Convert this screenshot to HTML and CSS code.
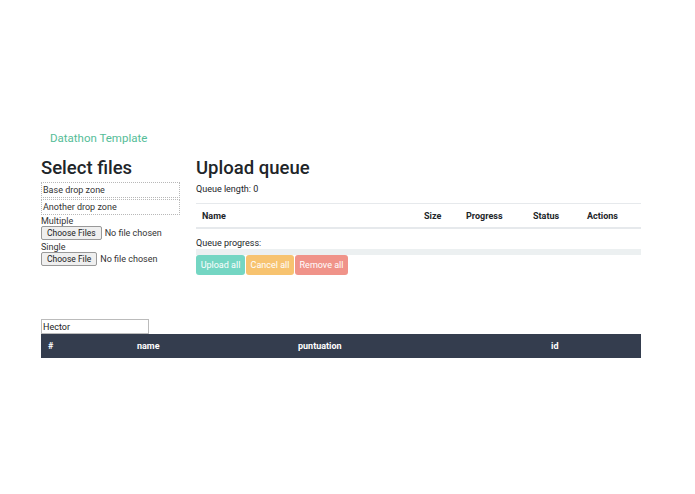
FILE: index.html
```html
<!DOCTYPE html>
<html lang="en">
<head>
  <meta charset="UTF-8">
  <title>Datathon Template</title>
  <link rel="stylesheet" href="styles.css">
</head>
<body>
  <div class="navbar"><span class="brand">Datathon Template</span></div>

  <div class="container">
    <div class="row">
      <div class="col-left">
        <h3>Select files</h3>
        <div class="drop-zone">Base drop zone</div>
        <div class="drop-zone">Another drop zone</div>
        <div class="label">Multiple</div>
        <div class="file-line"><button class="file-btn">Choose Files</button><span>No file chosen</span></div>
        <div class="label">Single</div>
        <div class="file-line"><button class="file-btn">Choose File</button><span>No file chosen</span></div>
      </div>

      <div class="col-right">
        <h3>Upload queue</h3>
        <p class="qlen">Queue length: 0</p>
        <table class="queue">
          <thead>
            <tr>
              <th class="c-name">Name</th>
              <th class="c-size">Size</th>
              <th class="c-prog">Progress</th>
              <th class="c-status">Status</th>
              <th class="c-act">Actions</th>
            </tr>
          </thead>
        </table>
        <div class="qprog">Queue progress:</div>
        <div class="progress"></div>
        <div class="btns">
          <button class="btn btn-success">Upload all</button>
          <button class="btn btn-warning">Cancel all</button>
          <button class="btn btn-danger">Remove all</button>
        </div>
      </div>
    </div>

    <input class="search" type="text" value="Hector">
    <table class="scores">
      <thead>
        <tr>
          <th class="s-num">#</th>
          <th class="s-name">name</th>
          <th class="s-punt">puntuation</th>
          <th class="s-id">id</th>
        </tr>
      </thead>
    </table>
  </div>
</body>
</html>
```

FILE: styles.css
```css
body {
  margin: 0;
  font-family: Roboto, "Liberation Sans", sans-serif;
  font-size: 9px;
  color: #212529;
  background: #fff;
}

.navbar {
  padding: 131px 0 0 50px;
  height: 18px;
}
.brand {
  color: #55bd98;
  font-size: 11.5px;
}

.container {
  width: 600px;
  margin-left: 41px;
  padding-top: 8px;
}

.row {
  display: flex;
  gap: 16px;
}
.col-left {
  width: 139px;
}
.col-right {
  flex: 1;
}

h3 {
  margin: 0 0 2px;
  font-size: 18.5px;
  font-weight: 500;
  line-height: 22px;
}

.col-left h3 {
  margin-bottom: 3px;
}

.drop-zone {
  border: 1px dotted #b8b8b8;
  padding: 0 1px;
  height: 14px;
  line-height: 14px;
  margin-bottom: 1px;
  color: #333;
}

.label {
  line-height: 10px;
  color: #333;
}
.file-line {
  display: flex;
  align-items: center;
  gap: 3px;
  margin: 0 0 2px;
  color: #333;
}
.file-btn {
  font-family: inherit;
  font-size: 8.5px;
  color: #222;
  background: #efefef;
  border: 1px solid #999;
  border-radius: 2px;
  height: 14px;
  padding: 0 5px;
}

.qlen {
  margin: 5px 0 8px;
  line-height: 11px;
}

.queue {
  width: 100%;
  border-collapse: collapse;
  border-top: 1px solid #e6e9ec;
  border-bottom: 2px solid #e6e9ec;
}
.queue th {
  text-align: left;
  font-weight: 700;
  height: 23px;
  padding: 0;
}
.c-name { padding-left: 6px !important; }
.c-size { width: 42px; }
.c-prog { width: 67px; }
.c-status { width: 54px; }
.c-act { width: 54px; }

.qprog {
  margin-top: 8px;
  line-height: 12px;
}
.progress {
  height: 6px;
  background: #ecf0f1;
}
.btns {
  display: flex;
}
.btn {
  font-family: inherit;
  font-size: 9px;
  color: #fff;
  border: none;
  border-radius: 3px;
  height: 20px;
  padding: 0;
  white-space: nowrap;
  opacity: 0.6;
  margin-right: 1px;
}
.btn-success { background: #18bc9c; width: 49px; }
.btn-warning { background: #f39c12; width: 48px; }
.btn-danger { background: #e74c3c; width: 53px; }

.search {
  display: block;
  margin-top: 44px;
  width: 108px;
  height: 15px;
  box-sizing: border-box;
  border: 1px solid #bbb;
  font-family: inherit;
  font-size: 9px;
  padding: 0 1px;
  color: #222;
}

.scores {
  width: 100%;
  border-collapse: collapse;
  background: #343d4e;
  color: #fff;
}
.scores th {
  text-align: left;
  height: 24px;
  padding: 0;
  font-weight: 700;
}
.s-num { padding-left: 7px !important; width: 89px; }
.s-name { width: 161px; }
.s-punt { width: 253px; }
```
